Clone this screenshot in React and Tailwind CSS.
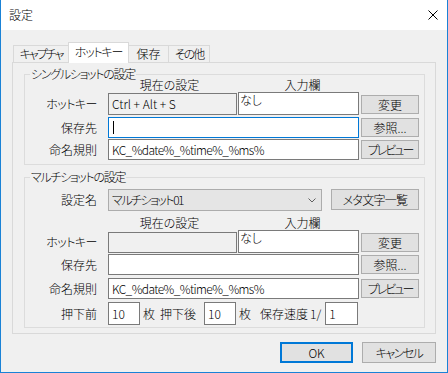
function Button({ className = '', children }) {
  return (
    <div className={`flex items-center justify-center border border-[#adadad] bg-[#e1e1e1] text-black ${className}`}>
      {children}
    </div>
  )
}

function Field({ className = '', children }) {
  return (
    <div className={`flex border border-[#7a7a7a] ${className}`}>
      {children}
    </div>
  )
}

function Row({ label, className = '', children }) {
  return (
    <div className={`flex items-end ${className}`}>
      <div className="w-[72px] self-center text-right">{label}</div>
      <div className="ml-[11px] flex h-full items-end">{children}</div>
    </div>
  )
}

function Group({ title, className = '', children }) {
  return (
    <div className={`relative border border-[#dcdcdc] ${className}`}>
      <span className="absolute left-[5px] top-[-8px] bg-[#f0f0f0] px-[1px] leading-[14px] tracking-[-1.3px]">{title}</span>
      {children}
    </div>
  )
}

function Header({ className = '' }) {
  return (
    <div className={`flex items-center pl-[83px] ${className}`}>
      <div className="w-[129px] pr-[6px] text-center">現在の設定</div>
      <div className="ml-[1px] w-[121px] pl-[8px] text-center">入力欄</div>
    </div>
  )
}

function Tab({ className = '', children }) {
  return (
    <div className={`flex items-center justify-center border-[#d9d9d9] ${className}`}>{children}</div>
  )
}

const hotkeyLabel = <span className="tracking-[-0.5px]">ホットキー</span>

export default function App() {
  return (
    <div className="flex h-[373px] w-[448px] flex-col border-x border-b border-[#1a82d6] bg-[#f0f0f0] font-['Noto_Sans_CJK_JP',sans-serif] text-[12px] font-light leading-[14px] text-black [font-feature-settings:'palt']">
      {/* Title bar */}
      <div className="flex h-[30px] items-center justify-between bg-white pl-[8px] pr-[9px]">
        <span>設定</span>
        <svg width="10" height="10" viewBox="0 0 10 10">
          <path d="M0.5 0.5 L9.5 9.5 M9.5 0.5 L0.5 9.5" stroke="#000" strokeWidth="1" fill="none" />
        </svg>
      </div>

      {/* Tabs */}
      <div className="mt-[12px] flex h-[20px] items-end pl-[12px]">
        <Tab className="h-[17px] w-[55px] border-l border-t tracking-[-2px]">キャプチャ</Tab>
        <Tab className="relative z-10 -mb-[1px] h-[21px] w-[61px] items-start border-x border-t bg-white pt-[2px] tracking-[-1.2px]">ホットキー</Tab>
        <Tab className="h-[17px] w-[40px] border-r border-t">保存</Tab>
        <Tab className="h-[17px] w-[41px] border-r border-t tracking-[-2px]">その他</Tab>
      </div>

      {/* Panel */}
      <div className="mx-[11px] flex flex-col border border-[#d9d9d9] bg-[#f0f0f0]">
        <Group title="シングルショットの設定" className="ml-[11px] mr-[10px] mt-[11px] pb-[4px] pt-[2px]">
          <Header className="h-[15px]" />
          <Row label={hotkeyLabel} className="h-[23px]">
            <Field className="h-[22px] w-[129px] items-center bg-[#f0f0f0] pl-[3px]">Ctrl + Alt + S</Field>
            <Field className="ml-[1px] h-[23px] w-[121px] bg-white pl-[1px]">なし</Field>
            <Button className="mb-[1px] ml-[2px] h-[19px] w-[58px]">変更</Button>
          </Row>
          <Row label="保存先" className="mt-[2px] h-[21px]">
            <div className="flex h-[21px] w-[251px] items-center border border-[#0078d7] bg-white pl-[4px]">
              <div className="h-[13px] w-[1px] bg-black" />
            </div>
            <Button className="mb-[1px] ml-[2px] h-[19px] w-[58px]">参照...</Button>
          </Row>
          <Row label="命名規則" className="mt-[1px] h-[21px]">
            <Field className="h-[21px] w-[251px] items-center bg-white pl-[3px] tracking-[-0.6px]">KC_%date%_%time%_%ms%</Field>
            <Button className="mb-[1px] ml-[2px] h-[19px] w-[58px] tracking-[-2px]">プレビュー</Button>
          </Row>
        </Group>

        <Group title="マルチショットの設定" className="mb-[5px] ml-[11px] mr-[10px] mt-[12px] pb-[2px] pt-[11px]">
          <div className="flex h-[22px] items-start">
            <div className="w-[72px] self-center text-right">設定名</div>
            <div className="ml-[11px] flex h-[22px] w-[214px] items-center justify-between border border-[#acacac] bg-[#e5e5e5] pl-[3px] pr-[5px]">
              <span className="tracking-[-1.5px]">マルチショット01</span>
              <svg width="8" height="5" viewBox="0 0 8 5">
                <path d="M0.5 0.5 L4 4 L7.5 0.5" stroke="#606060" strokeWidth="1" fill="none" />
              </svg>
            </div>
            <Button className="ml-[9px] h-[21px] w-[88px] tracking-[-0.7px]">メタ文字一覧</Button>
          </div>
          <Header className="mt-[5px] h-[14px]" />
          <Row label={hotkeyLabel} className="h-[23px]">
            <Field className="h-[21px] w-[129px] bg-[#f0f0f0]" />
            <Field className="ml-[1px] h-[23px] w-[121px] bg-white pl-[1px]">なし</Field>
            <Button className="mb-[1px] ml-[2px] h-[19px] w-[58px]">変更</Button>
          </Row>
          <Row label="保存先" className="mt-[1px] h-[21px]">
            <Field className="h-[21px] w-[251px] bg-white" />
            <Button className="mb-[1px] ml-[2px] h-[19px] w-[58px]">参照...</Button>
          </Row>
          <Row label="命名規則" className="mt-[3px] h-[21px]">
            <Field className="h-[21px] w-[251px] items-center bg-white pl-[3px] tracking-[-0.6px]">KC_%date%_%time%_%ms%</Field>
            <Button className="mb-[1px] ml-[2px] h-[19px] w-[58px] tracking-[-2px]">プレビュー</Button>
          </Row>
          <Row label="押下前" className="mt-[3px] h-[23px]">
            <div className="flex h-[23px] items-center">
              <Field className="h-[23px] w-[32px] items-center bg-white pl-[3px]">10</Field>
              <span className="ml-[3px]">枚</span>
              <span className="ml-[5px]">押下後</span>
              <Field className="ml-[8px] h-[23px] w-[32px] items-center bg-white pl-[3px]">10</Field>
              <span className="ml-[3px]">枚</span>
              <span className="ml-[9px]">保存速度</span>
              <span className="ml-[2px]">1/</span>
              <Field className="ml-[4px] h-[23px] w-[33px] items-center bg-white pl-[3px]">1</Field>
            </div>
          </Row>
        </Group>
      </div>

      {/* Dialog buttons */}
      <div className="mt-[8px] flex justify-end gap-[9px] pr-[11px]">
        <div className="flex h-[21px] w-[73px] items-center justify-center border-2 border-[#0078d7] bg-[#e1e1e1]">OK</div>
        <Button className="h-[21px] w-[74px] tracking-[-1.5px]">キャンセル</Button>
      </div>
    </div>
  )
}
